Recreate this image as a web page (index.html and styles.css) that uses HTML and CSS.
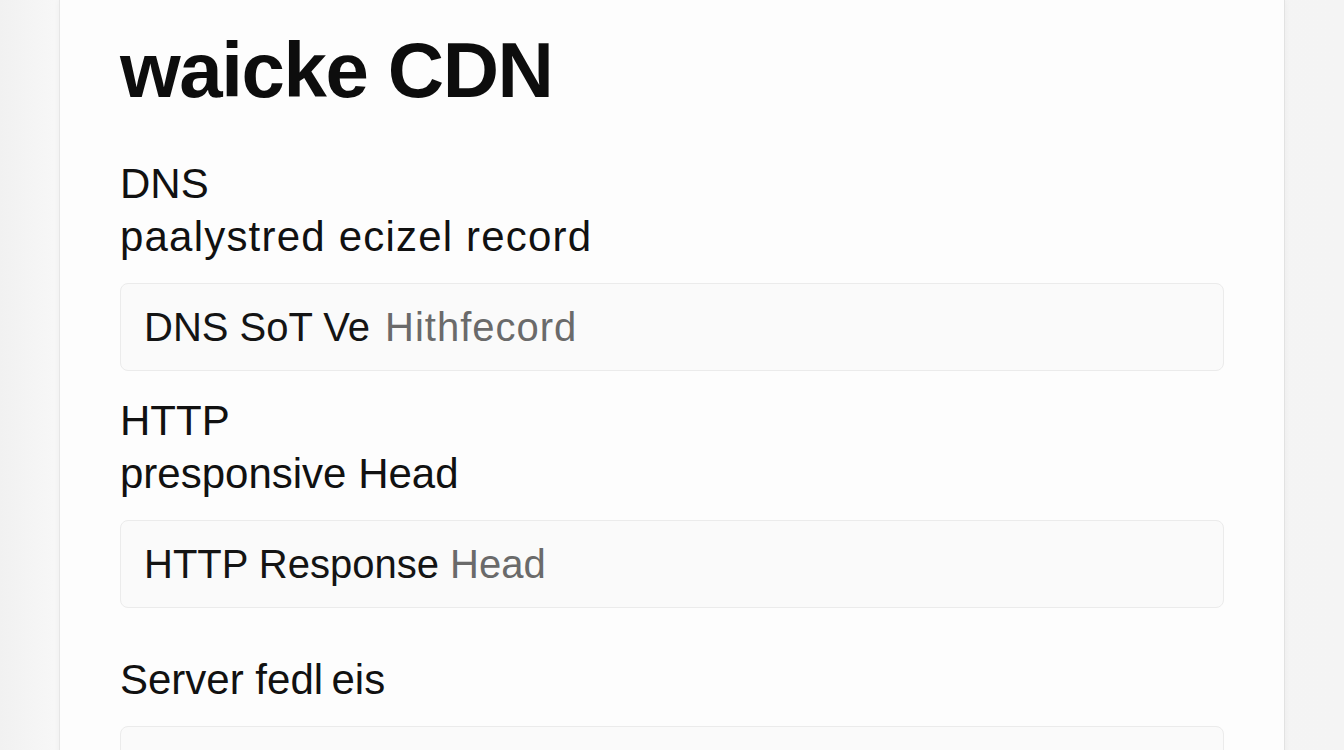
FILE: index.html
```html
<!DOCTYPE html>
<html lang="en">
<head>
<meta charset="utf-8">
<title>waicke CDN</title>
<link rel="stylesheet" href="styles.css">
</head>
<body>
  <main class="panel">
    <h1 class="title">waicke CDN</h1>

    <section class="field">
      <div class="label">
        <div>DNS</div>
        <div class="label-wide">paalystred ecizel record</div>
      </div>
      <div class="input">
        <span class="value">DNS SoT Ve</span><span class="hint hint-gap hint-wide">Hithfecord</span>
      </div>
    </section>

    <section class="field">
      <div class="label">
        <div>HTTP</div>
        <div>presponsive Head</div>
      </div>
      <div class="input">
        <span class="value">HTTP Response</span>&nbsp;<span class="hint">Head</span>
      </div>
    </section>

    <section class="field field-spaced">
      <div class="label">
        <div>Server fedl&#8201;eis</div>
      </div>
      <div class="input"></div>
    </section>
  </main>
</body>
</html>
```

FILE: styles.css
```css
* {
  box-sizing: border-box;
}

html,
body {
  height: 100%;
}

body {
  margin: 0;
  background: linear-gradient(90deg, #f1f1f1 0%, #f7f7f7 4%, #f4f4f4 100%);
  font-family: "Liberation Sans", Arial, Helvetica, sans-serif;
  color: #111;
  overflow: hidden;
}

.panel {
  margin: 0 59px;
  min-height: 100%;
  background: #fdfdfd;
  border-left: 1px solid #e6e6e6;
  border-right: 1px solid #e2e2e2;
  box-shadow: 0 0 6px rgba(0, 0, 0, 0.04);
  padding: 26px 60px 0 60px;
  display: flex;
  flex-direction: column;
}

.title {
  margin: 0;
  font-size: 78px;
  line-height: 88px;
  font-weight: 700;
  letter-spacing: -1.4px;
  color: #0d0d0d;
}

.field {
  display: flex;
  flex-direction: column;
  gap: 20px;
  margin-top: 23px;
}

.title + .field {
  margin-top: 43px;
}

.field-spaced {
  margin-top: 45px;
}

.label {
  font-size: 42px;
  line-height: 53px;
  color: #111;
}

.label-wide {
  letter-spacing: 1.2px;
}

.input {
  height: 88px;
  border: 1px solid #ebebeb;
  border-radius: 8px;
  background: #fafafa;
  display: flex;
  align-items: center;
  padding-left: 23px;
  font-size: 40px;
  white-space: nowrap;
}

.value {
  color: #141414;
}

.hint {
  color: #6a6a6a;
}

.hint-gap {
  margin-left: 15px;
}

.hint-wide {
  letter-spacing: 1px;
}
```
